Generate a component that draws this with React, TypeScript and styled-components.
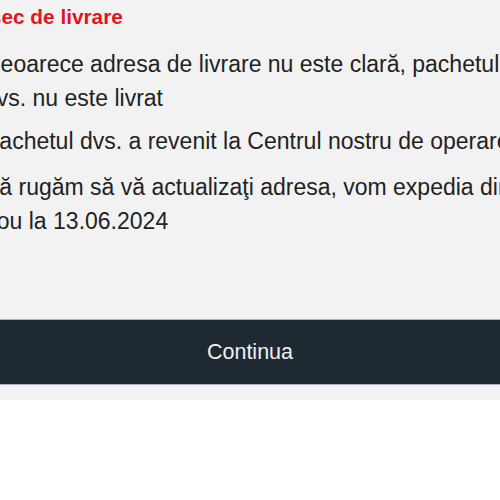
import styled, { createGlobalStyle } from "styled-components";

const GlobalStyle = createGlobalStyle`
  html, body {
    margin: 0;
    padding: 0;
    background: #ffffff;
    overflow: hidden;
  }
  body {
    font-family: "Liberation Sans", Arial, Helvetica, sans-serif;
  }
`;

const Panel = styled.div`
  display: flex;
  flex-direction: column;
  height: 400px;
  background: #f2f2f2;
  overflow: hidden;
`;

const Content = styled.div`
  width: 548px;
  margin-left: -16px;
`;

const Title = styled.h2`
  margin: 5px 0 0 -8px;
  font-size: 20.8px;
  line-height: 24px;
  font-weight: 700;
  color: #e3141c;
`;

const Paragraph = styled.p<{ $top?: number }>`
  margin: ${(p) => p.$top ?? 9}px 0 0;
  font-size: 23px;
  line-height: 34px;
  color: #222222;
`;

const ContinueBar = styled.button`
  margin-top: auto;
  margin-bottom: 15px;
  height: 66px;
  width: 100%;
  border: none;
  border-top: 1px solid #aab4bc;
  border-bottom: 1px solid #aab4bc;
  background: #1f2932;
  color: #eef0f2;
  font-family: "Liberation Sans", Arial, Helvetica, sans-serif;
  font-size: 21.5px;
  cursor: pointer;
`;

export default function App() {
  return (
    <>
      <GlobalStyle />
      <Panel>
        <Content>
          <Title>Eşec de livrare</Title>
          <Paragraph $top={18}>
            Deoarece adresa de livrare nu este clară, pachetul dvs. nu este
            livrat
          </Paragraph>
          <Paragraph>
            Pachetul dvs. a revenit la Centrul nostru de operare
          </Paragraph>
          <Paragraph $top={12}>
            Vă rugăm să vă actualizaţi adresa, vom expedia din nou la
            13.06.2024
          </Paragraph>
        </Content>
        <ContinueBar>Continua</ContinueBar>
      </Panel>
    </>
  );
}
